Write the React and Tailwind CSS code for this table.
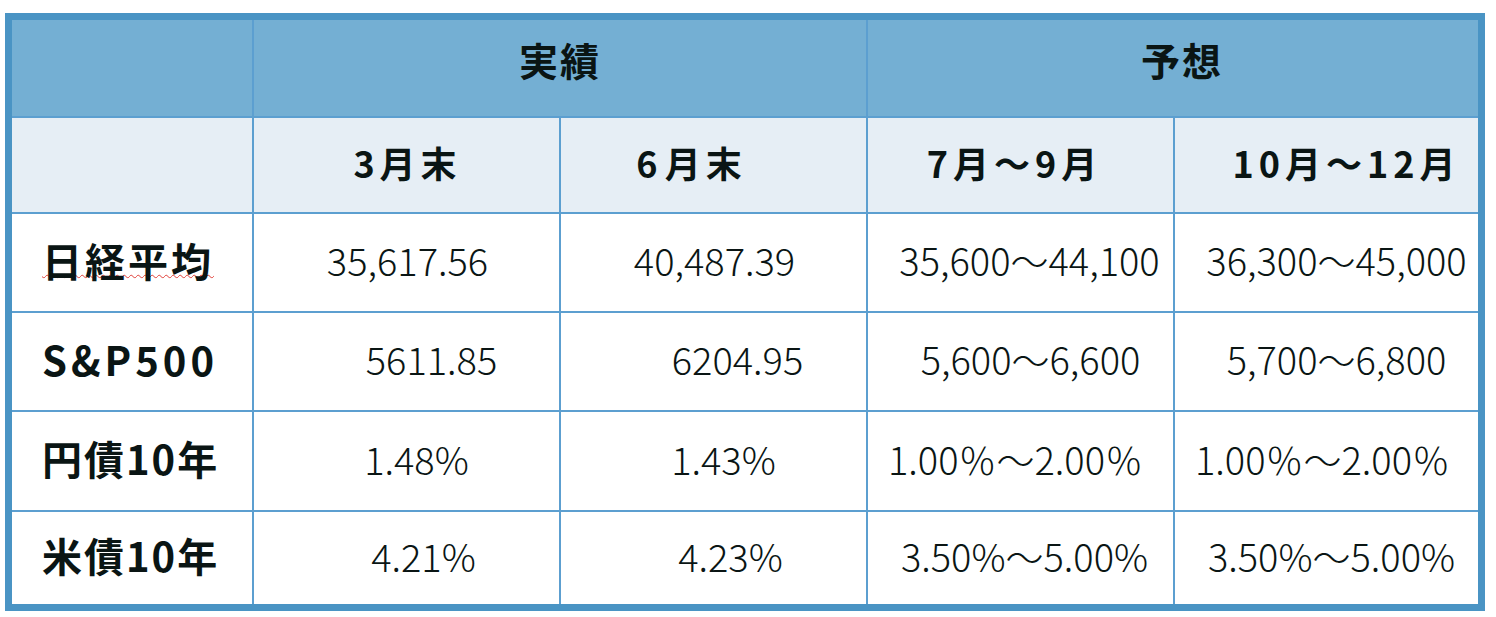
import React from 'react';

const font = { fontFamily: '"Noto Sans CJK JP", "Noto Sans", sans-serif' };

// periods shown in the second header row
const periods = [
  { label: '3月末', cls: 'tracking-[5px] pl-[2px]' },
  { label: '6 月末', cls: 'tracking-[5px] pr-[44px]' },
  { label: '7月～9月', cls: 'tracking-[5px] pr-[12px]' },
  { label: '10月～12月', cls: 'tracking-[5px] pl-[40px]' },
];

// each value keeps its own little shift, like in the source sheet
const rows = [
  {
    name: '日経平均',
    nameCls: 'tracking-[3px] underline decoration-wavy decoration-[#e0403a] decoration-1 underline-offset-[-3px]',
    values: [
      { v: '35,617.56', cls: 'pl-[2px]' },
      { v: '40,487.39', cls: 'pl-[2px]' },
      { v: '35,600～44,100', cls: 'pl-[18px]' },
      { v: '36,300～45,000', cls: 'pl-[20px]' },
    ],
  },
  {
    name: 'S&P500',
    nameCls: 'tracking-[4px]',
    values: [
      { v: '5611.85', cls: 'pl-[50px]' },
      { v: '6204.95', cls: 'pl-[48px]' },
      { v: '5,600～6,600', cls: 'pl-[20px]' },
      { v: '5,700～6,800', cls: 'pl-[20px]' },
    ],
  },
  {
    name: '円債10年',
    nameCls: 'tracking-[2px]',
    values: [
      { v: '1.48%', cls: 'pl-[20px]' },
      { v: '1.43%', cls: 'pl-[20px]' },
      { v: '1.00％～2.00％', cls: 'pr-[10px]' },
      { v: '1.00％～2.00％', cls: 'pr-[8px]' },
    ],
  },
  {
    name: '米債10年',
    nameCls: 'tracking-[2px]',
    values: [
      { v: '4.21%', cls: 'pl-[34px]' },
      { v: '4.23%', cls: 'pl-[34px]' },
      { v: '3.50%～5.00%', cls: 'pl-[8px]' },
      { v: '3.50%～5.00%', cls: 'pl-[10px]' },
    ],
  },
];

const PeriodLabel = ({ label }) => {
  // the "6 月末" cell has a narrow gap after the digit
  if (label === '6 月末') {
    return (
      <>
        6<span className="text-[10px] tracking-normal"> </span>月末
      </>
    );
  }
  return label;
};

const App = () => {
  return (
    <div className="bg-white w-[1496px] h-[617px] pt-[13px] pl-[5px]" style={font}>
      <div className="w-[1480px] border-[7px] border-[#4a94c4] bg-[#5c9fd0]">
        <div className="grid grid-cols-[240px_305px_305px_305px_303px] grid-rows-[96px_94px_97px_97px_98px_92px] gap-[2px] text-[#0a1514]">
          {/* top header */}
          <div className="bg-[#74afd3]"></div>
          <div className="col-span-2 bg-[#74afd3] flex items-center justify-center pb-[18px] text-[39px] font-bold tracking-[2px]">
            実績
          </div>
          <div className="col-span-2 bg-[#74afd3] flex items-center justify-center pl-[18px] pb-[18px] text-[39px] font-bold tracking-[2px]">
            予想
          </div>

          {/* periods */}
          <div className="bg-[#e6eef5]"></div>
          {periods.map((p, i) => (
            <div key={i} className={`bg-[#e6eef5] flex items-center justify-center pb-[6px] text-[36px] font-bold ${p.cls}`}>
              <span className="whitespace-nowrap"><PeriodLabel label={p.label} /></span>
            </div>
          ))}

          {rows.map((row) => (
            <React.Fragment key={row.name}>
              <div className="bg-white flex items-center pl-[30px] pb-[6px]">
                <span className={`text-[40px] font-bold whitespace-nowrap ${row.nameCls}`}>{row.name}</span>
              </div>
              {row.values.map((c, j) => (
                <div key={j} className={`bg-white flex items-center justify-center pb-[6px] ${c.cls}`}>
                  <span className="text-[38px] font-light whitespace-nowrap">{c.v}</span>
                </div>
              ))}
            </React.Fragment>
          ))}
        </div>
      </div>
    </div>
  );
};

export default App;
